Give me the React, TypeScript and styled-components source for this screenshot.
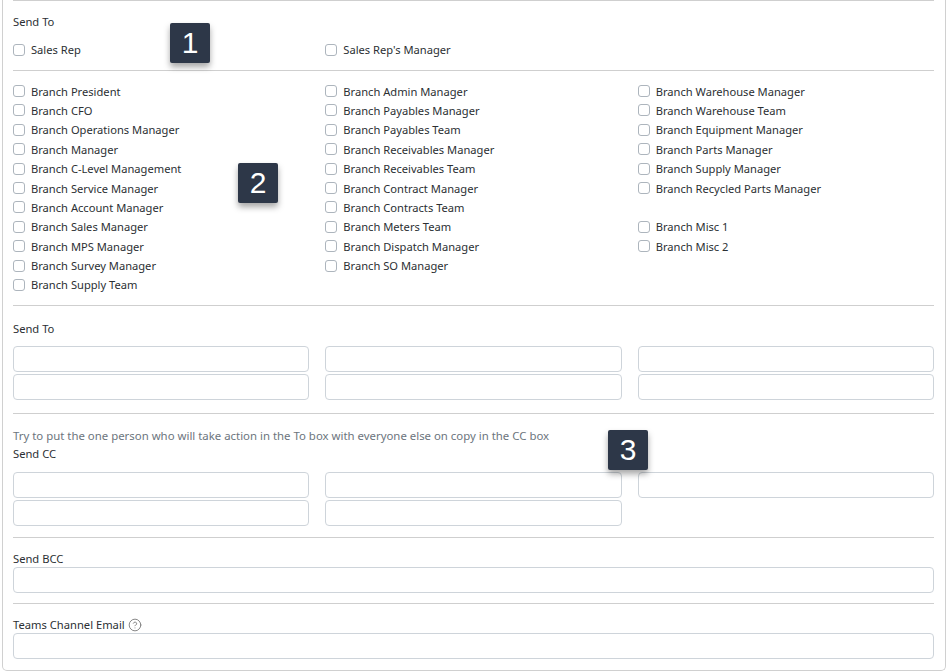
import styled, { createGlobalStyle } from 'styled-components'
import { CircleHelp } from 'lucide-react'

const GlobalStyle = createGlobalStyle`
  html, body {
    margin: 0;
    padding: 0;
    background: #fff;
    font-family: 'Noto Sans', 'Open Sans', 'Liberation Sans', sans-serif;
    font-size: 11.4px;
    color: #2b2f33;
  }
`

const Page = styled.div`
  position: relative;
  width: 949px;
  height: 672px;
  overflow: hidden;
`

const Card = styled.div`
  box-sizing: border-box;
  margin-left: 2px;
  width: 944px;
  height: 671px;
  padding: 0 11px 0 10px;
  border: 1px solid #d0d0d0;
  border-top: none;
  border-radius: 0 0 5px 5px;
`

const Divider = styled.hr<{ $top?: number; $bottom?: number }>`
  margin: ${(p) => p.$top ?? 0}px 0 ${(p) => p.$bottom ?? 0}px;
  border: none;
  border-top: 1px solid #cfcfcf;
`

const Label = styled.div<{ $height: number }>`
  display: flex;
  align-items: center;
  gap: 3px;
  height: ${(p) => p.$height}px;
  font-size: 11.2px;
  line-height: 1;
`

const Note = styled.div`
  height: 18px;
  line-height: 17px;
  color: #6c757d;
`

const Columns = styled.div<{ $top?: number }>`
  display: grid;
  grid-template-columns: repeat(3, 1fr);
  column-gap: 16px;
  margin-top: ${(p) => p.$top ?? 0}px;
`

const CheckColumn = styled.div`
  display: flex;
  flex-direction: column;
`

const CheckRow = styled.label`
  display: flex;
  align-items: center;
  gap: 6px;
  height: 19.4px;
  font-size: 11.15px;
  white-space: nowrap;
`

const Box = styled.span`
  box-sizing: border-box;
  width: 12px;
  height: 12px;
  flex: none;
  border: 1px solid #adb5bd;
  border-radius: 3px;
`

const EmptyRow = styled.div`
  height: 19.4px;
`

const InputStack = styled.div`
  display: flex;
  flex-direction: column;
  gap: 2px;
`

const TextBox = styled.div`
  box-sizing: border-box;
  height: 26px;
  border: 1px solid #ced4da;
  border-radius: 4px;
  background: #fff;
`

const HelpIcon = styled(CircleHelp)`
  width: 14px;
  height: 14px;
  color: #777;
`

const Badge = styled.div<{ $x: number; $y: number }>`
  position: absolute;
  left: ${(p) => p.$x}px;
  top: ${(p) => p.$y}px;
  width: 40px;
  height: 40px;
  display: flex;
  align-items: center;
  justify-content: center;
  background: #2d3748;
  color: #fff;
  border-radius: 2px;
  font-family: 'Liberation Sans', sans-serif;
  font-size: 30px;
  box-shadow: 0 4px 6px rgba(0, 0, 0, 0.35);
`

const listColumns: (string | null)[][] = [
  [
    'Branch President',
    'Branch CFO',
    'Branch Operations Manager',
    'Branch Manager',
    'Branch C-Level Management',
    'Branch Service Manager',
    'Branch Account Manager',
    'Branch Sales Manager',
    'Branch MPS Manager',
    'Branch Survey Manager',
    'Branch Supply Team',
  ],
  [
    'Branch Admin Manager',
    'Branch Payables Manager',
    'Branch Payables Team',
    'Branch Receivables Manager',
    'Branch Receivables Team',
    'Branch Contract Manager',
    'Branch Contracts Team',
    'Branch Meters Team',
    'Branch Dispatch Manager',
    'Branch SO Manager',
  ],
  [
    'Branch Warehouse Manager',
    'Branch Warehouse Team',
    'Branch Equipment Manager',
    'Branch Parts Manager',
    'Branch Supply Manager',
    'Branch Recycled Parts Manager',
    null,
    'Branch Misc 1',
    'Branch Misc 2',
  ],
]

function Check({ text }: { text: string }) {
  return (
    <CheckRow>
      <Box />
      {text}
    </CheckRow>
  )
}

export default function App() {
  return (
    <Page>
      <GlobalStyle />
      <Card>
        <Divider $bottom={11} />
        <Label $height={19}>Send To</Label>
        <Columns $top={9}>
          <Check text="Sales Rep" />
          <Check text="Sales Rep's Manager" />
        </Columns>
        <Divider $top={11} $bottom={10} />
        <Columns>
          {listColumns.map((col, i) => (
            <CheckColumn key={i}>
              {col.map((text, j) => (text ? <Check key={j} text={text} /> : <EmptyRow key={j} />))}
            </CheckColumn>
          ))}
        </Columns>
        <Divider $top={10} $bottom={13} />
        <Label $height={19}>Send To</Label>
        <Columns $top={8}>
          {[0, 1, 2].map((i) => (
            <InputStack key={i}>
              <TextBox />
              <TextBox />
            </InputStack>
          ))}
        </Columns>
        <Divider $top={13} $bottom={13} />
        <Note>Try to put the one person who will take action in the To box with everyone else on copy in the CC box</Note>
        <Label $height={17}>Send CC</Label>
        <Columns $top={10}>
          <InputStack>
            <TextBox />
            <TextBox />
          </InputStack>
          <InputStack>
            <TextBox />
            <TextBox />
          </InputStack>
          <InputStack>
            <TextBox />
          </InputStack>
        </Columns>
        <Divider $top={11} $bottom={13} />
        <Label $height={16}>Send BCC</Label>
        <TextBox />
        <Divider $top={10} $bottom={13} />
        <Label $height={16}>
          Teams Channel Email <HelpIcon strokeWidth={1.5} />
        </Label>
        <TextBox />
      </Card>
      <Badge $x={170} $y={23}>1</Badge>
      <Badge $x={238} $y={163}>2</Badge>
      <Badge $x={608} $y={430}>3</Badge>
    </Page>
  )
}
